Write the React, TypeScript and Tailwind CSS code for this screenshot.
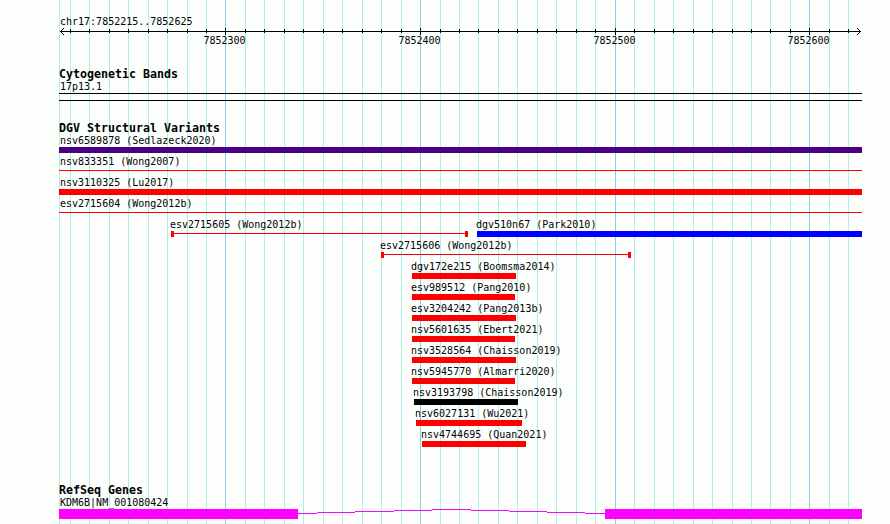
import React from 'react';

const minorLines = [
  59, 70, 89, 109, 128, 148, 167, 187, 206, 245, 264, 284, 303, 323, 342, 362, 381, 401,
  440, 459, 478, 498, 517, 537, 556, 576, 595, 634, 654, 673, 693, 712, 732, 751, 770, 790,
  829, 848
];

const majorLines = [
  { x: 225, label: '7852300' },
  { x: 420, label: '7852400' },
  { x: 615, label: '7852500' },
  { x: 809, label: '7852600' }
];

type Variant = {
  name: string;
  start: number;
  end: number;
  color: string;
  kind: 'bar' | 'line' | 'range';
};

const fullWidth: Variant[] = [
  { name: 'nsv6589878 (Sedlazeck2020)', start: 59, end: 862, color: '#4b0082', kind: 'bar' },
  { name: 'nsv833351 (Wong2007)', start: 59, end: 862, color: '#ff0000', kind: 'line' },
  { name: 'nsv3110325 (Lu2017)', start: 59, end: 862, color: '#ff0000', kind: 'bar' },
  { name: 'esv2715604 (Wong2012b)', start: 59, end: 862, color: '#ff0000', kind: 'line' }
];

const rows: Variant[][] = [
  ...fullWidth.map((variant) => [variant]),
  [
    { name: 'esv2715605 (Wong2012b)', start: 171, end: 468, color: '#ff0000', kind: 'range' },
    { name: 'dgv510n67 (Park2010)', start: 477, end: 862, color: '#0000ff', kind: 'bar' }
  ],
  [{ name: 'esv2715606 (Wong2012b)', start: 381, end: 631, color: '#ff0000', kind: 'range' }],
  [{ name: 'dgv172e215 (Boomsma2014)', start: 412, end: 516, color: '#ff0000', kind: 'bar' }],
  [{ name: 'esv989512 (Pang2010)', start: 412, end: 515, color: '#ff0000', kind: 'bar' }],
  [{ name: 'esv3204242 (Pang2013b)', start: 412, end: 516, color: '#ff0000', kind: 'bar' }],
  [{ name: 'nsv5601635 (Ebert2021)', start: 412, end: 515, color: '#ff0000', kind: 'bar' }],
  [{ name: 'nsv3528564 (Chaisson2019)', start: 412, end: 516, color: '#ff0000', kind: 'bar' }],
  [{ name: 'nsv5945770 (Almarri2020)', start: 412, end: 515, color: '#ff0000', kind: 'bar' }],
  [{ name: 'nsv3193798 (Chaisson2019)', start: 414, end: 518, color: '#000000', kind: 'bar' }],
  [{ name: 'nsv6027131 (Wu2021)', start: 416, end: 522, color: '#ff0000', kind: 'bar' }],
  [{ name: 'nsv4744695 (Quan2021)', start: 422, end: 526, color: '#ff0000', kind: 'bar' }]
];

function Grid() {
  return (
    <svg className="absolute inset-0" width="890" height="524" shapeRendering="crispEdges">
      {minorLines.map((x) => (
        <rect key={x} x={x} y="0" width="1" height="524" fill="#afeeee" />
      ))}
      {majorLines.map(({ x }) => (
        <rect key={x} x={x} y="0" width="1" height="524" fill="#87ceeb" />
      ))}
    </svg>
  );
}

function Ruler() {
  return (
    <svg className="block" width="890" height="48" shapeRendering="crispEdges">
      <rect x="60" y="4" width="801" height="1" fill="#000" />
      <path
        d="M61 3h1v1h-1zM62 2h1v1h-1zM63 1h1v1h-1zM61 5h1v1h-1zM62 6h1v1h-1zM63 7h1v1h-1z"
        fill="#000"
      />
      <path
        d="M859 3h1v1h-1zM858 2h1v1h-1zM857 1h1v1h-1zM859 5h1v1h-1zM858 6h1v1h-1zM857 7h1v1h-1z"
        fill="#000"
      />
      {minorLines.slice(1).map((x) => (
        <rect key={x} x={x} y="2" width="1" height="4" fill="#000" />
      ))}
      {majorLines.map(({ x, label }) => (
        <g key={x}>
          <rect x={x} y="1" width="1" height="7" fill="#000" />
          <text x={x - 21.5} y="17" className="text-[10px]">{label}</text>
        </g>
      ))}
    </svg>
  );
}

function TrackTitle({ children }: { children: React.ReactNode }) {
  return (
    <h2 className="ml-[59px] h-3 whitespace-pre text-[11.63px] font-bold leading-3">{children}</h2>
  );
}

function Glyph({ variant }: { variant: Variant }) {
  const { color, kind } = variant;
  if (kind === 'bar') {
    return <div className="h-1.5 w-full" style={{ backgroundColor: color }} />;
  }
  return (
    <div className="flex h-1.5 w-full items-center justify-between">
      {kind === 'range' && <div className="h-1.5 w-[3px]" style={{ backgroundColor: color }} />}
      <div className="mb-px h-px flex-1" style={{ backgroundColor: color }} />
      {kind === 'range' && <div className="h-1.5 w-[3px]" style={{ backgroundColor: color }} />}
    </div>
  );
}

function VariantRow({ items }: { items: Variant[] }) {
  return (
    <div className="flex h-[21px]">
      {items.map((variant, index) => {
        const previousEnd = index === 0 ? 0 : items[index - 1].end;
        // labels of features cut off at the left edge are indented a little
        const indent = variant.start === 59 ? 'ml-px' : '-ml-px';
        return (
          <div
            key={variant.name}
            className="shrink-0"
            style={{ marginLeft: variant.start - previousEnd, width: variant.end - variant.start }}
          >
            <div className={`${indent} h-3 whitespace-pre text-[10px] leading-3`}>
              {variant.name}
            </div>
            <Glyph variant={variant} />
          </div>
        );
      })}
    </div>
  );
}

export default function App() {
  return (
    <div className="relative h-[524px] w-[890px] overflow-hidden bg-[#fdfffc] font-['DejaVu_Sans_Mono',monospace] text-black">
      <Grid />
      <div className="relative flex flex-col">
        <div className="ml-[60px] mt-[15px] h-3 text-[10px] leading-[14px]">
          chr17:7852215..7852625
        </div>
        <Ruler />
        <div className="-mt-[7px]">
          <TrackTitle>Cytogenetic Bands</TrackTitle>
          <div className="ml-[60px] h-[13px] text-[10px] leading-[14px]">17p13.1</div>
          <div className="ml-[59px] h-2 w-[803px] border-y border-black" />
        </div>
        <div className="mt-[21px]">
          <TrackTitle>DGV Structural Variants</TrackTitle>
          <div className="pt-px">
            {rows.map((items) => (
              <VariantRow key={items[0].name} items={items} />
            ))}
          </div>
        </div>
        <div className="mt-[34px]">
          <TrackTitle>RefSeq Genes</TrackTitle>
          <div className="ml-[60px] h-[13px] text-[10px] leading-[14px]">KDM6B|NM_001080424</div>
          <svg className="block" width="890" height="15" shapeRendering="crispEdges">
            <path
              d="M59 0h239v10H59zM605 0h257v10H605zM298 4h19v1h-19zM317 3h38v1h-38zM355 2h39v1h-39zM394 1h38v1h-38zM432 0h39v1h-39zM471 1h38v1h-38zM509 2h38v1h-38zM547 3h38v1h-38zM585 4h20v1h-20z"
              fill="#ff00ff"
            />
          </svg>
        </div>
      </div>
    </div>
  );
}
